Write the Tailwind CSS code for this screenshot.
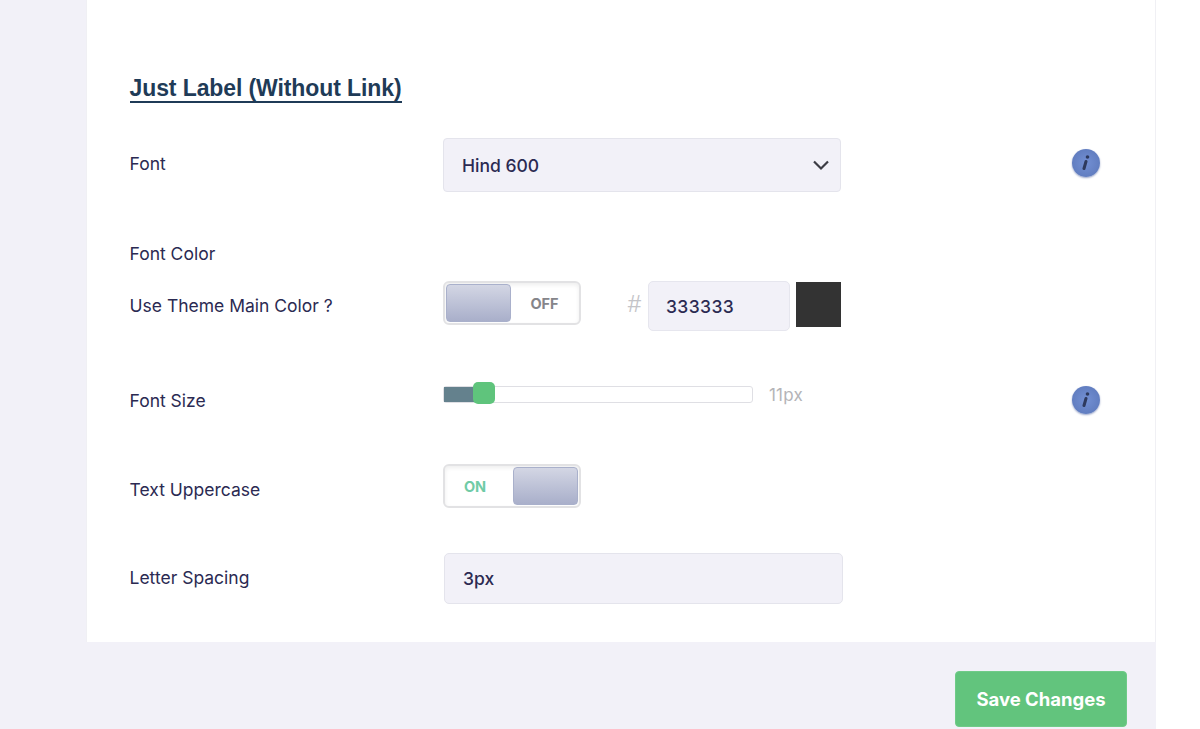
<!DOCTYPE html>
<html><head><meta charset="utf-8"><script src="https://cdn.jsdelivr.net/npm/@tailwindcss/browser@4"></script></head>
<body class="bg-white overflow-hidden font-['Inter',sans-serif]">
<div class="w-[1200px] h-[729px] overflow-hidden">
<div class="w-[1156px] h-[729px] bg-[#f2f1f8] pl-[86px]">
  <div class="w-[1070px] h-[642px] bg-white border-x border-[#f0f0f4] pl-[42.5px] pt-[73px] text-[#2b2a52] text-[17.5px] leading-[22px]">
    <div class="h-[30px]"><span class="inline-block pt-[2px] font-['Liberation_Sans',sans-serif] font-bold text-[23px] leading-[26px] text-[#1f3b57] border-b-2 border-[#1f3b57] tracking-[-0.1px]">Just Label (Without Link)</span></div>

    <div class="flex items-start mt-[35px] h-[54px]">
      <div class="w-[313.5px] pt-[15px]">Font</div>
      <div class="w-[398px] h-[54px] bg-[#f2f1f8] border border-[#e4e4ec] rounded-[4px] pl-[18px] pr-[10px] flex items-center justify-between">
        <span class="pt-[1px] font-medium">Hind 600</span>
        <svg class="w-[18px] h-[12px]" viewBox="0 0 18 12" fill="none" stroke="#3c3c44" stroke-width="2.2"><path d="M2 2.5l7 7 7-7"/></svg>
      </div>
      <div class="ml-[231px] mt-[11px] w-[28px] h-[28px] rounded-full bg-radial from-[#7390d4] to-[#5a76b8] shadow-[0_1px_2px_#9aa5c8] flex items-center justify-center">
        <svg class="w-[10px] h-[18px] blur-[0.5px]" viewBox="0 0 10 18"><circle cx="6.5" cy="3" r="1.8" fill="#2e3a5e"/><path d="M5 7.5L3 14.5" stroke="#2e3a5e" stroke-width="3" stroke-linecap="round"/></svg>
      </div>
    </div>

    <div class="mt-[51px] h-[22px]">Font Color</div>

    <div class="flex items-start mt-[16px] h-[47px]">
      <div class="w-[313.5px] pt-[14px]">Use Theme Main Color ?</div>
      <div class="w-[138px] h-[44px] bg-white border-2 border-[#e2e2e4] rounded-[6px] p-[1px] flex items-center shadow-[inset_0_2px_4px_#eee]">
        <div class="w-[65px] h-[38px] rounded-[4px] bg-linear-to-b from-[#d3d6e4] to-[#a9afca] border border-[#a9b0cb]"></div>
        <div class="flex-1 text-center text-[14.5px] font-bold text-[#85858a] pt-[2px]">OFF</div>
      </div>
      <div class="w-[67px] pt-[12px] pr-[7px] text-right text-[24px] text-[#c4c4c8] font-['Liberation_Sans',sans-serif]">#</div>
      <div class="w-[142px] h-[50px] bg-[#f2f1f8] border border-[#e6e6ee] rounded-[5px] pl-[17px] pt-[2px] flex items-center tracking-[0.4px] font-medium">333333</div>
      <div class="ml-[6px] mt-[1px] w-[45px] h-[45px] bg-[#333333]"></div>
    </div>

    <div class="flex items-start mt-[59px] h-[30px]">
      <div class="w-[313.5px] pt-[3px]">Font Size</div>
      <div class="relative w-[310px] h-[17px] mt-[-1px] bg-white border border-[#dfdfe4] rounded-[3px]">
        <div class="w-[30px] h-[15px] bg-[#64818d]"></div>
        <div class="absolute left-[29px] top-[-5px] w-[22px] h-[22px] rounded-[5px] bg-[#5fc47c]"></div>
      </div>
      <div class="ml-[16px] mt-[-3px] text-[#b4b4b8] text-[17px] tracking-[0.2px]">11px</div>
      <div class="ml-[269px] mt-[-1px] w-[28px] h-[28px] rounded-full bg-radial from-[#7390d4] to-[#5a76b8] shadow-[0_1px_2px_#9aa5c8] flex items-center justify-center">
        <svg class="w-[10px] h-[18px] blur-[0.5px]" viewBox="0 0 10 18"><circle cx="6.5" cy="3" r="1.8" fill="#2e3a5e"/><path d="M5 7.5L3 14.5" stroke="#2e3a5e" stroke-width="3" stroke-linecap="round"/></svg>
      </div>
    </div>

    <div class="flex items-start mt-[47px] h-[44px]">
      <div class="w-[313.5px] pt-[15px]">Text Uppercase</div>
      <div class="w-[138px] h-[44px] bg-white border-2 border-[#e2e2e4] rounded-[6px] p-[1px] flex items-center shadow-[inset_0_2px_4px_#eee]">
        <div class="flex-1 text-center text-[14.5px] font-bold text-[#6fcba6] pr-[9px] pt-[2px]">ON</div>
        <div class="w-[65px] h-[38px] rounded-[4px] bg-linear-to-b from-[#d3d6e4] to-[#a9afca] border border-[#a9b0cb]"></div>
      </div>
    </div>

    <div class="flex items-start mt-[45px] h-[50px]">
      <div class="w-[314.5px] pt-[14px]">Letter Spacing</div>
      <div class="w-[399px] h-[51px] bg-[#f2f1f8] border border-[#e4e4ec] rounded-[5px] pl-[18px] flex items-center font-medium">3px</div>
    </div>
  </div>
  <div class="flex justify-end pr-[29px] pt-[29px]">
    <button class="w-[172px] h-[56px] pt-[2px] bg-[#62c47d] border border-[#6fcb88] rounded-[4px] text-white font-bold text-[18.5px]">Save Changes</button>
  </div>
</div>
</div>
</body></html>
